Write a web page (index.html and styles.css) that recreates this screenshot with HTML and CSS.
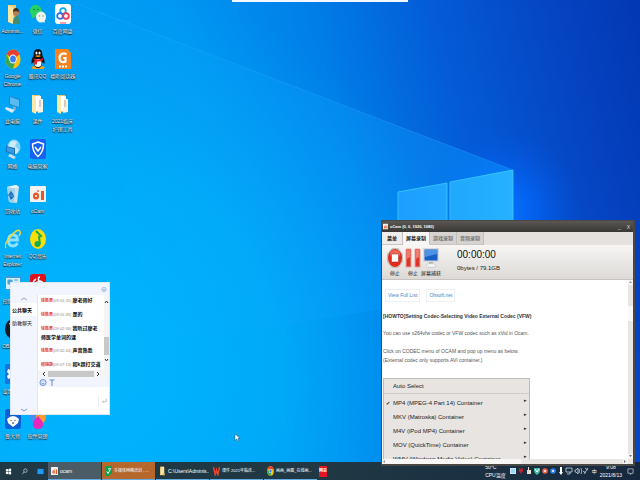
FILE: index.html
```
<!DOCTYPE html>
<html lang="zh-CN">
<head>
<meta charset="utf-8">
<title>桌面</title>
<link rel="stylesheet" href="styles.css">
</head>
<body>
<svg class="wallpaper" viewBox="0 0 640 480" preserveAspectRatio="none" aria-hidden="true">
  <defs>
    <linearGradient id="sky" x1="0" y1="0.18" x2="1" y2="0">
      <stop offset="0" stop-color="#00a2f6"/><stop offset=".3" stop-color="#0097f2"/><stop offset=".5" stop-color="#007ee8"/><stop offset=".68" stop-color="#045cd6"/><stop offset=".85" stop-color="#0546c4"/><stop offset="1" stop-color="#0337b2"/>
    </linearGradient>
    <radialGradient id="low" gradientUnits="userSpaceOnUse" cx="90" cy="360" r="380">
      <stop offset="0" stop-color="#00b6fc"/><stop offset=".5" stop-color="#00b0fb" stop-opacity=".75"/><stop offset="1" stop-color="#00a0f6" stop-opacity="0"/>
    </radialGradient>
    <radialGradient id="glow" gradientUnits="userSpaceOnUse" cx="500" cy="210" r="80">
      <stop offset="0" stop-color="#0878ff"/><stop offset=".35" stop-color="#0468fa" stop-opacity=".8"/><stop offset="1" stop-color="#0458e8" stop-opacity="0"/>
    </radialGradient>
    <linearGradient id="beam" x1="0" y1="0" x2="1" y2="0">
      <stop offset="0" stop-color="#10b4ff" stop-opacity="0"/><stop offset="1" stop-color="#0896ff" stop-opacity=".8"/>
    </linearGradient>
    <linearGradient id="pane" x1="0" y1="0" x2="1" y2="0">
      <stop offset="0" stop-color="#1c9eff"/><stop offset="1" stop-color="#26b2ff"/>
    </linearGradient>
  </defs>
  <rect width="640" height="480" fill="url(#sky)"/>
  <rect width="640" height="480" fill="url(#low)"/>
  <rect width="640" height="480" fill="url(#glow)"/>
  <path d="M80 5L513 170 513 308 398 307 160 344Z" fill="url(#beam)" opacity=".6"/>
  <path d="M80 5L513 170" stroke="#36b4ff" stroke-width=".8" opacity=".35"/>
  <path d="M398 192L447 183V300H398ZM450 182L513 170V300H450Z" fill="url(#pane)" stroke="#3cccff" stroke-width=".8"/>
</svg>

<svg hidden>
  <defs>
    <symbol id="i-folder" viewBox="0 0 16 20" preserveAspectRatio="none"><path d="M3 1h8v17H3z" fill="#e9bd5a"/><path d="M5 2h7v16H5l-2 1V3z" fill="#fae39a"/><path d="M11 14h2v5h-6z" fill="#d9a944"/></symbol>
    <symbol id="i-user" viewBox="0 0 16 20" preserveAspectRatio="none"><path d="M3 1h8v17H3z" fill="#f0c968"/><path d="M3 1l5 2v17l-5-2z" fill="#fbe5a3"/><path d="M8 20q0-8 3.500-8T15 20z" fill="#3d8b78"/><circle cx="11" cy="9" r="3" fill="#b67d51"/><path d="M8 8q0-4 3-4t3 4l-3-1z" fill="#3b3029"/></symbol>
    <symbol id="i-wechat" viewBox="0 0 16 20" preserveAspectRatio="none"><path d="M5.500 1C2 1 0 3.500 0 7c0 2 1 4 2 5l-.5 3 2.500-2c5 1 7.500-2 7.500-6S9 1 5.500 1z" fill="#29d164"/><ellipse cx="11" cy="13" rx="5" ry="5.500" fill="#ecf5ee"/><path d="M12 17l3 2-1-4z" fill="#ecf5ee"/><circle cx="4" cy="5.500" r=".8" fill="#16703b"/><circle cx="8" cy="5.500" r=".8" fill="#16703b"/><circle cx="9.500" cy="12" r=".7" fill="#888"/><circle cx="13" cy="12" r=".7" fill="#888"/></symbol>
    <symbol id="i-pan" viewBox="0 0 16 20" preserveAspectRatio="none"><rect width="16" height="20" rx="3" fill="#fff"/><g fill="none" stroke-width="1.800"><circle cx="8" cy="7" r="2.800" stroke="#12a8e8"/><circle cx="5" cy="12" r="2.800" stroke="#2476ee"/><circle cx="11" cy="12" r="2.800" stroke="#f0374c"/></g><path d="M5 19h6" stroke="#e84258"/></symbol>
    <symbol id="i-chrome" viewBox="0 0 20 20" preserveAspectRatio="none"><circle cx="10" cy="10" r="9.500" fill="#fbc116"/><path d="M10 10L1.800 5.200A9.500 9.500 0 0 1 18.200 5.500z" fill="#e8402f"/><path d="M1.800 5.200A9.500 9.500 0 0 0 10 19.500L13 12 6 12z" fill="#36a852"/><path d="M3 4q8-7 15.500 1.500H10z" fill="#e8402f"/><circle cx="10" cy="10" r="4.600" fill="#fff"/><circle cx="10" cy="10" r="3.600" fill="#3c7ff0"/></symbol>
    <symbol id="i-qq" viewBox="0 0 16 20" preserveAspectRatio="none"><ellipse cx="5" cy="18.500" rx="3.500" ry="1.500" fill="#f8a01a"/><ellipse cx="11" cy="18.500" rx="3.500" ry="1.500" fill="#f8a01a"/><path d="M8 0C4.500 0 3.500 3 3.500 7 2 9 1 12 1.500 15l2-2q1 6 4.500 6t4.500-6l2 2c.5-3-.5-6-2-8 0-4-1-7-4.500-7z" fill="#0b1015"/><ellipse cx="8" cy="14" rx="3.500" ry="4" fill="#fff"/><path d="M3 9q5 3 10 0v2q-3 2-6 1.500v3H4.500v-4z" fill="#ec1f26"/><ellipse cx="6.500" cy="4" rx="1" ry="1.500" fill="#fff"/><ellipse cx="9.500" cy="4" rx="1" ry="1.500" fill="#fff"/><path d="M5 7q3-1.500 6 0-3 2-6 0z" fill="#f8a01a"/></symbol>
    <symbol id="i-foxit" viewBox="0 0 16 20" preserveAspectRatio="none"><path d="M0 0h13l3 4v16H0z" fill="#f58320"/><path d="M11.500 5.500C9 3 4.500 5 4.500 9s3 5 6 3.500V9H8" fill="none" stroke="#fff" stroke-width="2.200"/><path d="M4 17.500h2m1 0h2m1 0h2" stroke="#fff" stroke-width="2"/></symbol>
    <symbol id="i-pc" viewBox="0 0 16 20" preserveAspectRatio="none"><path d="M4 2l11 3v9L4 11z" fill="#2583ce"/><path d="M5 3l9 3v7l-9-3z" fill="#55bdf3"/><path d="M8 12l3 1v3H8z" fill="#8ca4b5"/><path d="M1 13l9 3-3 3-7-4z" fill="#dce8f0"/></symbol>
    <symbol id="i-files" viewBox="0 0 16 20" preserveAspectRatio="none"><path d="M2 1h8v17H2z" fill="#edc568"/><path d="M5 2h6v15H5z" fill="#fff"/><path d="M2 1l4 2v17l-4-2z" fill="#fce8aa"/><path d="M9 5h4v13l-5 1z" fill="#f7f3e5"/><path d="M10 6v7" stroke="#bfa0a0"/></symbol>
    <symbol id="i-net" viewBox="0 0 16 20" preserveAspectRatio="none"><ellipse cx="9" cy="8" rx="6.500" ry="7.500" fill="#7fd2fa"/><path d="M5 3q4-3 7 0l-2 4 4 4-3 4-4-4-4-3z" fill="#dff1f8" opacity=".8"/><path d="M1 7l9 2v7l-9-3z" fill="#1b75bd"/><path d="M2 8l7 2v5l-7-3z" fill="#3c9be0"/><path d="M5 15l6 3-2 2-6-3z" fill="#d5e0e8"/></symbol>
    <symbol id="i-shield" viewBox="0 0 16 20" preserveAspectRatio="none"><rect width="16" height="20" rx="2" fill="#1762f0"/><path d="M8 3l5.500 2q0 8-5.500 12.500Q2.500 13 2.500 5z" fill="none" stroke="#fff" stroke-width="1.500"/><path d="M5 8l3 4 3-4" fill="none" stroke="#fff" stroke-width="1.500"/></symbol>
    <symbol id="i-bin" viewBox="0 0 16 20" preserveAspectRatio="none"><path d="M2 3l9-2 3 2-2 16-8-1z" fill="#c8e2ef"/><path d="M2 3l8 1-1 15-5-1z" fill="#a5cfe7"/><path d="M2 3l9-2 3 2-4 1z" fill="#edf7fb"/><path d="M6 8l2 3H4zM5 13h3l-2 2z" fill="none" stroke="#146fc4" stroke-width="1.300"/></symbol>
    <symbol id="i-ocam" viewBox="0 0 16 20" preserveAspectRatio="none"><rect y="2" width="16" height="16" rx="1" fill="#f4f1ee"/><ellipse cx="6" cy="12" rx="3" ry="3.500" fill="#e25524"/><circle cx="6" cy="12" r="1" fill="#fff"/><path d="M11 7h3v9h-3z" fill="#df5a2c"/><circle cx="8" cy="7" r="1" fill="#d2725a"/></symbol>
    <symbol id="i-ie" viewBox="0 0 16 20" preserveAspectRatio="none"><path d="M3.500 11h9q0-5-4.500-5T3.500 11.500t4.500 5.500q3 0 4.500-3" fill="none" stroke="#8fe2ff" stroke-width="2.800"/><path d="M1 19Q-2 16 6 7t9-4q1 1-1 4" fill="none" stroke="#f5d535" stroke-width="1.500"/></symbol>
    <symbol id="i-music" viewBox="0 0 16 20" preserveAspectRatio="none"><ellipse cx="8" cy="10" rx="8" ry="10" fill="#fbdd08"/><path d="M6 2l5 5-2 1 1 7" fill="none" stroke="#18ad4d" stroke-width="2"/><ellipse cx="7.500" cy="15" rx="3" ry="3" fill="#18ad4d"/></symbol>
    <symbol id="i-panel" viewBox="0 0 16 20" preserveAspectRatio="none"><path d="M0 2h16v14H0z" fill="#3a9ce0"/><path d="M1 4h14v11H1z" fill="#d2effb"/><path d="M3 6h4v4H3zm6 0h4m-4 3h4" fill="#4ea4d4" stroke="#4ea4d4"/></symbol>
    <symbol id="i-netease" viewBox="0 0 16 20" preserveAspectRatio="none"><rect width="16" height="20" rx="3" fill="#df1220"/><path d="M10 3q-2 0-1.500 3l1 6q-3 2-3.500-1t4-4q4 1 3 5-2 4-6 4-5-1-4-7 1-3 3-4" fill="none" stroke="#fff" stroke-width="1.500"/></symbol>
    <symbol id="i-black" viewBox="0 0 16 20" preserveAspectRatio="none"><ellipse cx="8" cy="10" rx="8" ry="10" fill="#151a20"/><path d="M4 5q5-3 8 2" stroke="#fff" fill="none"/></symbol>
    <symbol id="i-gear" viewBox="0 0 16 20" preserveAspectRatio="none"><rect width="16" height="20" rx="2" fill="#1174df"/><path d="M7 3h2l1 3 3-1 1 3-2 2 2 2-1 3-3-1-1 3H7l-1-3-3 1-1-3 2-2-2-2 1-3 3 1z" fill="#fff"/><circle cx="8" cy="10" r="2" fill="#1174df"/></symbol>
    <symbol id="i-bear" viewBox="0 0 16 20" preserveAspectRatio="none"><rect width="16" height="20" rx="3" fill="#0c5fd8"/><path d="M2 10q6-6 12 0l-1 4-5 4-5-4z" fill="#fff"/><path d="M6 11v1m4-1v1m-3 2h2" stroke="#203050"/></symbol>
    <symbol id="i-petal" viewBox="0 0 16 20" preserveAspectRatio="none"><ellipse cx="5" cy="8" rx="5" ry="6" fill="#4b8df8"/><ellipse cx="11" cy="8" rx="5" ry="6" fill="#ff9f26"/><path d="M8 7q5 5 5 8 0 5-5 5t-5-5q0-3 5-8z" fill="#e826bd"/></symbol>
    <symbol id="i-wps" viewBox="0 0 16 20" preserveAspectRatio="none"><path d="M1 2l4 15 3-9 3 9L15 2" fill="none" stroke="#e7432c" stroke-width="3.500"/></symbol>
    <symbol id="i-leaf" viewBox="0 0 16 20" preserveAspectRatio="none"><path d="M1 0h14l1 13-7 7H2L0 14z" fill="#0b9f50"/><path d="M4 11l3 4 6-10M7 6q5-2 6 0" fill="none" stroke="#fff" stroke-width="2"/></symbol>
  </defs>
</svg>

<main class="desktop">
  <ul>
    <li><svg><use href="#i-user"/></svg><span>Adminis...</span></li>
    <li><svg><use href="#i-chrome"/></svg><span>Google Chrome</span></li>
    <li><svg><use href="#i-pc"/></svg><span>此电脑</span></li>
    <li><svg><use href="#i-net"/></svg><span>网络</span></li>
    <li><svg><use href="#i-bin"/></svg><span>回收站</span></li>
    <li><svg><use href="#i-ie"/></svg><span>Internet Explorer</span></li>
    <li><svg><use href="#i-panel"/></svg><span>控制面板</span></li>
    <li><svg><use href="#i-black"/></svg><span>OBS录制</span></li>
    <li><svg><use href="#i-gear"/></svg><span>设置中心</span></li>
    <li><svg><use href="#i-bear"/></svg><span>鲁大师</span></li>
  </ul>
  <ul>
    <li><svg><use href="#i-wechat"/></svg><span>微信</span></li>
    <li><svg><use href="#i-qq"/></svg><span>腾讯QQ</span></li>
    <li><svg><use href="#i-files"/></svg><span>课件</span></li>
    <li><svg><use href="#i-shield"/></svg><span>电脑管家</span></li>
    <li><svg><use href="#i-ocam"/></svg><span>oCam</span></li>
    <li><svg><use href="#i-music"/></svg><span>QQ音乐</span></li>
    <li><svg><use href="#i-netease"/></svg></li>
    <li class="row-end"><svg><use href="#i-petal"/></svg><span>软件管理</span></li>
  </ul>
  <ul>
    <li><svg><use href="#i-pan"/></svg><span>百度网盘</span></li>
    <li><svg><use href="#i-foxit"/></svg><span>福昕阅读器</span></li>
    <li><svg><use href="#i-files"/></svg><span>2021临床护理工具</span></li>
  </ul>
</main>

<div class="top-strip"></div>

<section class="chat" aria-label="聊天">
  <header class="chat-top"><svg viewBox="0 0 8 8"><circle cx="4" cy="4" r="3" fill="#e3eafa" stroke="#a5b6db"/><path d="M2.500 3.500L4 5l1.500-1.500" fill="none" stroke="#6480c4"/></svg></header>
  <nav class="chat-side">
    <button class="arrow" aria-label="向上"><svg viewBox="0 0 8 4"><path d="M1 3l3-2 3 2" fill="none" stroke="#8795b0" stroke-width=".8"/></svg></button>
    <button class="room on">公共聊天</button>
    <button class="room">助教聊天</button>
    <button class="arrow end" aria-label="向下"><svg viewBox="0 0 8 4"><path d="M1 1l3 2 3-2" fill="none" stroke="#5d86d8" stroke-width=".8"/></svg></button>
  </nav>
  <div class="chat-main">
    <div class="log">
      <div class="messages">
        <p><b>徐胜男</b><time>(09:01:20)</time> 廖老师好</p>
        <p><b>徐胜男</b><time>(09:01:49)</time> 是的</p>
        <p><b>徐胜男</b><time>(09:02:30)</time> 我听过廖老<br>师医学单词的课</p>
        <p><b>徐胜男</b><time>(09:02:44)</time> 声音熟悉</p>
        <p><b>程晓静</b><time>(09:07:13)</time> 和k超打交道</p>
      </div>
      <div class="vbar"><svg viewBox="0 0 5 4"><path d="M1 3l1.500-2L4 3" fill="none" stroke="#333"/></svg><i></i><svg viewBox="0 0 5 4"><path d="M1 1l1.500 2L4 1" fill="none" stroke="#333"/></svg></div>
    </div>
    <div class="hbar"><svg viewBox="0 0 4 6"><path d="M3 1L1 3l2 2" fill="none" stroke="#333"/></svg><i></i><svg viewBox="0 0 4 6"><path d="M1 1l2 2-2 2" fill="none" stroke="#333"/></svg></div>
    <div class="tools">
      <button aria-label="表情"><svg viewBox="0 0 8 8"><circle cx="4" cy="4" r="3" fill="none" stroke="#4172cd" stroke-width=".8"/><path d="M2.500 4.500q1.500 2 3 0M3 2.800v.5m2-.5v.5" fill="none" stroke="#4172cd" stroke-width=".7"/></svg></button>
      <button aria-label="字体"><svg viewBox="0 0 8 8"><path d="M1.500 1.500h5M4 1.500v6" fill="none" stroke="#5380d0" stroke-width=".9"/></svg></button>
    </div>
    <div class="compose">
      <textarea aria-label="消息"></textarea>
      <button aria-label="发送"><svg viewBox="0 0 8 8"><path d="M7 1v4H2m1.500-1.500L2 5l1.500 1.500" fill="none" stroke="#a0a0a0" stroke-width=".8"/></svg></button>
    </div>
  </div>
</section>

<section class="recorder" aria-label="oCam">
  <header class="title"><svg><use href="#i-ocam"/></svg><h2>oCam (0, 0, 1920, 1080)</h2><button aria-label="最小化">_</button><button aria-label="关闭">X</button></header>
  <nav class="tabs"><button class="menu-tab">菜单</button><button class="on">屏幕录制</button><button>游戏录制</button><button>音频录制</button></nav>
  <div class="controls">
    <button><svg viewBox="0 0 16 20" preserveAspectRatio="none"><path d="M5 0h6l5 6v8l-5 6H5l-5-6V6z" fill="#c4c0bc"/><ellipse cx="8" cy="10" rx="7" ry="9" fill="#e22a1d"/><ellipse cx="8" cy="6" rx="5" ry="4" fill="#ef6a58"/><path d="M4.500 6h7v8h-7z" fill="#fff" stroke="#a9362b" stroke-width=".6"/></svg>停止</button>
    <button><svg viewBox="0 0 16 20" preserveAspectRatio="none"><path d="M1 1h5v18H1zM10 1h5v18h-5z" fill="#dc3427" stroke="#eba198"/><path d="M2 2h3v7l-3 2zM11 2h3v7l-3 2z" fill="#f07b6c"/></svg>停止</button>
    <button><svg viewBox="0 0 16 20" preserveAspectRatio="none"><path d="M0 0h16v14H0z" fill="#d6dae0"/><path d="M1.500 1.500h13v11h-13z" fill="#185fc4"/><path d="M2 2h12v4L2 9z" fill="#4e92e5"/><path d="M6 14h4v2H6z" fill="#b5b5b5"/><ellipse cx="8" cy="17.500" rx="5" ry="2" fill="#f6f6f6" stroke="#b5b5b5" stroke-width=".6"/></svg>屏幕捕获</button>
    <div class="status"><strong>00:00:00</strong><span>0bytes / 79.1GB</span></div>
  </div>
  <div class="browser">
    <div class="page">
      <div class="links"><a href="#list">View Full List</a><a href="#site">Ohsoft.net</a></div>
      <h3>[HOWTO]Setting Codec-Selecting Video External Codec (VFW)</h3>
      <p>You can use x264vfw codec or VFW codec such as xVid in Ocam.</p>
      <p>Click on CODEC menu of OCAM and pop up menu as below.<br>(External codec only supports AVI container.)</p>
      <ul class="codec">
        <li class="auto">Auto Select</li>
        <li class="checked">MP4 (MPEG-4 Part 14) Container</li>
        <li>MKV (Matroska) Container</li>
        <li>M4V (iPod MP4) Container</li>
        <li>MOV (QuickTime) Container</li>
        <li>WMV (Windows Media Video) Container</li>
      </ul>
    </div>
    <div class="page-v"><svg viewBox="0 0 5 5"><path d="M1 3l1.500-2L4 3z" fill="#999"/></svg><i></i><svg viewBox="0 0 5 5"><path d="M1 1l1.500 2L4 1z" fill="#777"/></svg></div>
    <div class="page-h"><svg viewBox="0 0 5 5"><path d="M3 1L1 2.500 3 4z" fill="#999"/></svg><i></i><svg viewBox="0 0 5 5"><path d="M1 1l2 1.500L1 4z" fill="#777"/></svg></div>
  </div>
</section>

<svg class="pointer" viewBox="0 0 8 12" aria-hidden="true"><path d="M1 1v8l2-2 1 3 1.500-.5-1-3H7z" fill="#fff" stroke="#345" stroke-width=".6"/></svg>

<footer class="taskbar">
  <button class="sys" aria-label="开始"><svg viewBox="0 0 8 8"><path d="M1 1.500l2.500-.5v2.700H1zM4 1l3-.5v3.200H4zM1 4.300h2.500V7L1 6.500zM4 4.300h3v3.200L4 7z" fill="#fff"/></svg></button>
  <button class="sys" aria-label="搜索"><svg viewBox="0 0 8 8"><circle cx="5" cy="3" r="2" fill="none" stroke="#e4eef2" stroke-width=".7"/><path d="M3.500 4.500L1.500 7" stroke="#e4eef2" stroke-width=".7"/></svg></button>
  <button class="sys" aria-label="桌面"><svg viewBox="0 0 8 8"><path d="M.5 1h7v6h-7z" fill="#1e9cf5"/></svg></button>
  <button class="task active"><svg><use href="#i-ocam"/></svg><span>ocam</span></button>
  <button class="task alert"><svg><use href="#i-leaf"/></svg><span class="zh">多媒体网络培训 - ...</span></button>
  <button class="task"><svg><use href="#i-folder"/></svg><span>C:\Users\Adminis...</span></button>
  <button class="task"><svg><use href="#i-wps"/></svg><span class="zh">课件 2021年临床...</span></button>
  <button class="task"><svg><use href="#i-chrome"/></svg><span class="zh">画画_画图_在线画...</span></button>
  <button class="red">网易</button>
  <div class="tray">
    <span class="cpu">50°C<br>CPU温度</span>
    <svg viewBox="0 0 80 10">
      <path d="M1 2h6v6H1z" fill="#cceafa"/><path d="M2 4h4M2 6h4" stroke="#36a3dc" stroke-width=".6"/>
      <path d="M10 2l2 1 2-1v3l-2 3-2-3z" fill="#c6202a"/>
      <path d="M18 4h4v4h-4zM19 1h1v3h-1z" fill="#e8dfcb"/>
      <path d="M25 2h6v3q0 2-3 4-3-2-3-4z" fill="#48bda6"/><path d="M26 3l2 3 2-3" stroke="#fff" fill="none"/>
      <circle cx="36" cy="5" r="2.800" fill="#eb6349"/><circle cx="36" cy="5" r="1" fill="#fff"/>
      <circle cx="44" cy="5" r="2.800" fill="#3282ee"/><circle cx="44" cy="5" r="1" fill="#fff"/>
      <path d="M51 1h2v5h-2zM50 6h4l-2 3z" fill="#fff"/>
      <g fill="none" stroke="#e1e9ec" stroke-width=".7"><path d="M57 2h6v4h-6zM58 8h3V6M66 4h1l2-2v6l-2-2h-1zM70 3q1 2 0 4M72 2q1.500 3 0 6M75 8l4-6m-3 0l3 2m-5 1l3 2"/></g>
    </svg>
    <span class="ime">中</span>
    <time>9:08<br>2021/8/13</time>
    <button aria-label="通知"><svg viewBox="0 0 8 8"><path d="M1 1h6v5H5L4 7.500V6H1z" fill="none" stroke="#dfe7ea" stroke-width=".7"/></svg></button>
  </div>
</footer>
</body>
</html>
```
FILE: styles.css
```
* { box-sizing: border-box; }
body {
  margin: 0;
  min-height: 100vh;
  display: flex;
  flex-direction: column;
  position: relative;
  overflow: hidden;
  background: #0099f0;
  font: 5px/8px "Liberation Sans", "Noto Sans CJK SC", sans-serif;
  color: #222;
}
button { border: 0; padding: 0; margin: 0; background: none; font: inherit; color: inherit; }
ul, p, h2, h3 { margin: 0; padding: 0; list-style: none; }
svg { display: block; flex: none; }
svg[hidden] { display: none; }
.wallpaper { position: absolute; inset: 0; width: 100%; height: 100%; z-index: -2; }

.desktop { flex: 1; display: flex; align-items: flex-start; padding-top: 4px; }
.desktop ul { width: 25px; }
.desktop li {
  height: 45px;
  display: flex;
  flex-direction: column;
  align-items: center;
  gap: 3px;
  text-align: center;
  color: #fff;
  text-shadow: 0 1px 1px #000, 0 0 1px #000;
}
.desktop svg { width: 16px; height: 20px; }
.desktop .row-end { margin-top: 90px; }

.top-strip {
  position: absolute;
  top: 0;
  left: 232px;
  width: 176px;
  height: 2px;
  background: #f2f8fc;
}

.chat {
  position: absolute;
  left: 10px;
  top: 282px;
  width: 100px;
  height: 133px;
  display: grid;
  grid-template: 12px 1fr / 27px 1fr;
  background: #fff;
  border: 1px solid #dce8f6;
}
.chat-top {
  grid-column: 1 / -1;
  display: flex;
  justify-content: flex-end;
  align-items: center;
  padding-right: 2px;
  background: #f2f5fd;
}
.chat-top svg { width: 6px; height: 7px; }
.chat-side { display: flex; flex-direction: column; background: #f2f5fd; border-right: 1px solid #e1e7f4; }
.arrow { height: 8px; display: flex; justify-content: center; align-items: center; }
.arrow svg { width: 8px; height: 4px; }
.arrow.end { margin-top: auto; }
.room { height: 13px; text-align: left; padding-left: 1px; white-space: nowrap; }
.room.on { background: #fff; font-weight: bold; color: #000; }
.chat-main { display: flex; flex-direction: column; min-width: 0; }
.log { display: flex; height: 75px; }
.messages { flex: 1; min-width: 0; padding: 1px 0 0 3px; white-space: nowrap; color: #000; font-weight: bold; }
.messages p { margin-bottom: 5px; }
.messages b, .messages time { font-size: 4px; }
.messages b { color: #e5533a; }
.messages time { color: #888; font-weight: normal; }
.vbar { width: 5px; display: flex; flex-direction: column; background: #f4f4f4; padding: 5px 0 8px; }
.vbar svg { width: 5px; height: 4px; }
.vbar i { height: 18px; margin: auto 0 3px; background: #c8c8c8; }
.hbar { display: flex; align-items: center; height: 7px; padding: 0 9px 0 4px; gap: 2px; background: #f4f4f4; }
.hbar svg { width: 4px; height: 6px; }
.hbar i { flex: 1; height: 6px; background: #c8c8c8; }
.tools { display: flex; height: 10px; gap: 1px; align-items: center; background: #f2f5fd; padding-left: 1px; }
.tools svg { width: 8px; height: 9px; }
.compose { flex: 1; display: flex; align-items: center; }
textarea { flex: 1; min-width: 0; height: 100%; border: 0; padding: 2px; resize: none; background: #fff; font: inherit; }
.compose button { border-left: 1px solid #eee; padding: 2px; }
.compose svg { width: 6px; height: 8px; }

.recorder {
  position: absolute;
  left: 381px;
  top: 220px;
  width: 254px;
  height: 246px;
  display: flex;
  flex-direction: column;
  border: 1px solid #4a4845;
  border-width: 1px 2px 2px 1px;
  background: #e6e3e0;
}
.title { display: flex; align-items: center; height: 11px; background: linear-gradient(#5a5754, #393734); color: #fff; gap: 2px; padding: 0 1px; }
.title svg { width: 5px; height: 7px; }
.title h2 { flex: 1; font-size: 4px; font-weight: bold; }
.title button { width: 7px; color: #ddd; }
.tabs { display: flex; height: 13px; background: #e4e1de; font-weight: bold; }
.tabs button { width: 27px; color: #777; background: #d6d3d0; border-right: 1px solid #c2bfbc; border-bottom: 1px solid #c8c5c2; white-space: nowrap; }
.tabs .menu-tab { width: 21px; background: #efedeb; color: #222; }
.tabs .on { background: #f7f6f5; color: #222; border-bottom-color: #f7f6f5; }
.controls { display: flex; height: 35px; padding: 3px 4px 0; background: linear-gradient(#f7f6f5, #dcd9d6); border-bottom: 1px solid #c5c2bf; }
.controls button { width: 18px; display: flex; flex-direction: column; align-items: center; gap: 1px; white-space: nowrap; }
.controls svg { width: 16px; height: 20px; }
.controls button { color: #111; }
.status { display: flex; flex-direction: column; margin-left: 15px; padding-left: 2px; gap: 2px; font-size: 6px; }
.status strong { font-size: 10px; line-height: 14px; font-weight: normal; color: #111; }
.browser { flex: 1; min-height: 0; display: grid; grid-template: minmax(0, 1fr) 5px / minmax(0, 1fr) 5px; background: #fff; }
.page { overflow: hidden; padding-left: 1px; color: #555; font-size: 5px; line-height: 9px; }
.links { display: flex; gap: 6px; padding: 9px 0 0 2px; }
.links a { color: #4a84c8; text-decoration: none; border: 1px solid #eef0f4; padding: 1px 2px; }
.page h3 { margin: 10px 0 8px; font-size: 5px; color: #333; }
.page p { margin-bottom: 9px; }
.codec { width: 147px; margin-top: 13px; background: #e7e4e1; border: 1px solid #bfbdba; color: #222; font-size: 6px; line-height: 14px; }
.codec li { display: flex; padding: 0 2px 0 9px; }
.codec li:not(.auto)::after { content: "▸"; margin-left: auto; font-size: 5px; line-height: 8px; }
.codec .auto { margin-bottom: 2px; border-bottom: 1px solid #cfccca; }
.codec .checked { padding-left: 2px; }
.codec .checked::before { content: "✔"; width: 7px; font-size: 5px; }
.page-v, .page-h { display: flex; justify-content: space-between; background: #e8e5e3; }
.page-v { flex-direction: column; }
.page-v svg, .page-h svg { width: 5px; height: 5px; background: #f6f5f4; }
.page-v i { height: 15px; margin: 21px 0 auto; background: #faf9f8; }
.page-h { grid-column: 1 / -1; padding-right: 5px; }
.page-h i { width: 134px; margin-right: auto; background: #f8f7f6; }

.pointer { position: absolute; left: 234px; top: 433px; width: 7px; height: 10px; }

.taskbar { position: relative; z-index: -1; display: flex; height: 18px; color: #fff; background: linear-gradient(90deg, #203844 50%, #16283f); }
.sys { width: 16px; display: grid; place-items: center; }
.sys svg { width: 7px; height: 9px; }
.task { width: 53px; margin-right: 1px; display: flex; align-items: center; gap: 2px; padding-left: 3px; border-bottom: 1px solid #62aee4; white-space: nowrap; overflow: hidden; }
.task svg { width: 7px; height: 10px; }
.task .zh { font-size: 4px; }
.active { background: #4b5c66; }
.alert { background: #b6672c; }
.red { align-self: center; width: 8px; height: 11px; margin-left: 1px; background: #e51528; font-size: 4px; font-weight: bold; }
.tray { margin-left: auto; display: flex; align-items: center; gap: 3px; padding-right: 6px; }
.tray > svg { width: 80px; height: 10px; }
.tray .cpu { white-space: nowrap; }
.tray time { text-align: center; }
.tray button { margin-left: 2px; }
.tray button svg { width: 7px; height: 9px; }
```
